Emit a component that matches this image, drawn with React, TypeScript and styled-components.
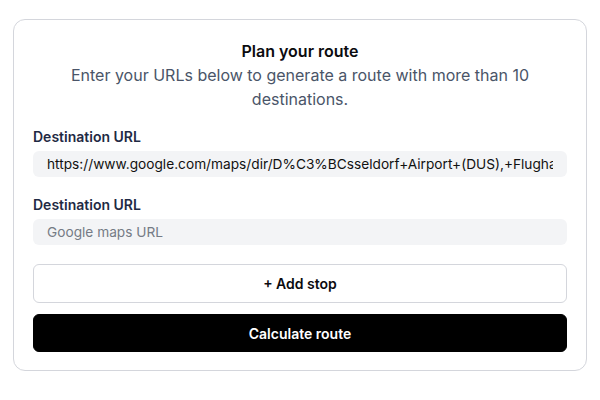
import React from "react";
import styled, { createGlobalStyle } from "styled-components";

const Global = createGlobalStyle`
  * { box-sizing: border-box; }
  body {
    margin: 0;
    background: #ffffff;
    font-family: Inter, "Noto Sans", sans-serif;
    -webkit-font-smoothing: antialiased;
  }
`;

const Page = styled.div`
  padding: 19px 13px;
`;

const Card = styled.div`
  border: 1px solid #d4d6dc;
  border-radius: 12px;
  padding: 19px 19px 18px 19px;
  display: flex;
  flex-direction: column;
`;

const Title = styled.h1`
  margin: 0;
  font-size: 16px;
  line-height: 24px;
  font-weight: 600;
  color: #0b0b0f;
  text-align: center;
`;

const Subtitle = styled.p`
  margin: 0 0 16px;
  font-size: 16px;
  line-height: 24px;
  font-weight: 400;
  color: #4a5568;
  text-align: center;
`;

const Field = styled.div<{ $gap: number }>`
  display: flex;
  flex-direction: column;
  gap: 4px;
  margin-bottom: ${(p) => p.$gap}px;
`;

const Label = styled.label`
  font-size: 14px;
  line-height: 20px;
  font-weight: 600;
  color: #1f2a44;
`;

const InputBox = styled.div`
  height: 26px;
  border-radius: 6px;
  background: #f3f4f6;
  padding: 0 14px;
  display: flex;
  align-items: center;
`;

const Input = styled.input`
  flex: 1;
  min-width: 0;
  height: 100%;
  border: none;
  background: transparent;
  padding: 0;
  font-family: Inter, "Noto Sans", sans-serif;
  font-size: 13.7px;
  color: #111111;
  outline: none;
  &::placeholder {
    color: #757b85;
  }
`;

const Button = styled.button<{ $primary?: boolean }>`
  width: 100%;
  height: ${(p) => (p.$primary ? 38 : 39)}px;
  border-radius: 6px;
  border: 1px solid ${(p) => (p.$primary ? "#000" : "#d4d6dc")};
  background: ${(p) => (p.$primary ? "#000" : "#fff")};
  color: ${(p) => (p.$primary ? "#fff" : "#0b0b0f")};
  font-family: Inter, "Noto Sans", sans-serif;
  font-size: 14px;
  font-weight: 600;
  margin-bottom: ${(p) => (p.$primary ? 0 : 11)}px;
  cursor: pointer;
`;

export default function App() {
  return (
    <>
      <Global />
      <Page>
        <Card>
          <Title>Plan your route</Title>
          <Subtitle>
            Enter your URLs below to generate a route with more than 10 destinations.
          </Subtitle>
          <Field $gap={18}>
            <Label>Destination URL</Label>
            <InputBox>
              <Input
                readOnly
                value="https://www.google.com/maps/dir/D%C3%BCsseldorf+Airport+(DUS),+Flughafen+D%C3%BCsseldorf"
              />
            </InputBox>
          </Field>
          <Field $gap={19}>
            <Label>Destination URL</Label>
            <InputBox>
              <Input placeholder="Google maps URL" />
            </InputBox>
          </Field>
          <Button>+ Add stop</Button>
          <Button $primary>Calculate route</Button>
        </Card>
      </Page>
    </>
  );
}
